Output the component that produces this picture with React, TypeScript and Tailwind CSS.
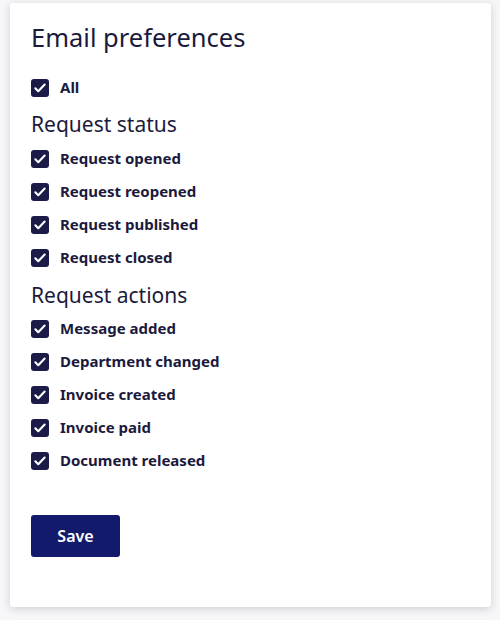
import React from "react";

const Check = () => (
  <span className="flex h-[18px] w-[18px] shrink-0 items-center justify-center rounded-[3px] bg-[#1c1b47]">
    <svg width="14" height="14" viewBox="0 0 24 24" fill="none" stroke="white" strokeWidth="3.6" strokeLinecap="round" strokeLinejoin="round">
      <path d="M4 12.5l5 5L20 6" />
    </svg>
  </span>
);

const Row = ({ label }: { label: string }) => (
  <label className="flex h-[33px] items-center gap-[11px]">
    <Check />
    <span className="text-[15px] font-bold text-[#1b1a3d]">{label}</span>
  </label>
);

export default function App() {
  return (
    <div className="min-h-[620px] bg-[#f7f7f9] pt-[3px] px-[10px]" style={{ fontFamily: '"Noto Sans", sans-serif' }}>
      <div className="h-[604px] w-[481px] rounded-[3px] bg-white pl-[21px] pt-[16px] shadow-[0_2px_8px_rgba(30,30,60,0.18)]">
        <h1 className="text-[25.5px] leading-[36px] text-[#1b1a3d]">Email preferences</h1>
        <div className="mt-[16px]">
          <Row label="All" />
        </div>
        <h2 className="mt-[6px] text-[21px] leading-[28px] text-[#1b1a3d]">Request status</h2>
        <div className="mt-[4px]">
          <Row label="Request opened" />
          <Row label="Request reopened" />
          <Row label="Request published" />
          <Row label="Request closed" />
        </div>
        <h2 className="mt-[7px] text-[21px] leading-[28px] text-[#1b1a3d]">Request actions</h2>
        <div className="mt-[3px]">
          <Row label="Message added" />
          <Row label="Department changed" />
          <Row label="Invoice created" />
          <Row label="Invoice paid" />
          <Row label="Document released" />
        </div>
        <button className="mt-[38px] h-[42px] w-[89px] rounded-[3px] bg-[#111a6b] text-[16px] font-semibold text-white">
          Save
        </button>
      </div>
    </div>
  );
}
